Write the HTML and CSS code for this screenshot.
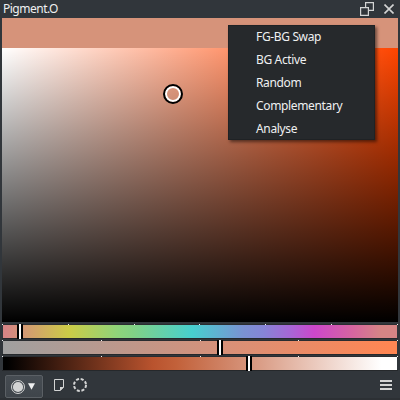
FILE: index.html
```
<!DOCTYPE html>
<html lang="en">
<head>
<meta charset="utf-8">
<title>Pigment.O</title>
<link rel="stylesheet" href="styles.css">
</head>
<body>
<main class="docker">
  <header class="titlebar">
    <span class="title">Pigment.O</span>
    <svg class="float-icon" width="14" height="14" viewBox="0 0 14 14"><path d="M5.6 5V.6h7.8v7.8H9M.6 5.6h7.8v7.8H.6z"/></svg>
    <svg class="close-icon" width="10" height="10" viewBox="0 0 10 10"><path d="M.5.5l9 9M9.5.5l-9 9"/></svg>
  </header>
  <div class="swatch"></div>
  <section class="field"><i class="cursor"></i></section>
  <section class="sliders">
    <div class="slider">
      <div class="ticks"><i></i><i></i><i></i><i></i><i></i><i></i><i></i></div>
      <div class="track hue"></div><b class="handle at-hue"></b>
    </div>
    <div class="slider">
      <div class="ticks"><i></i><i></i><i></i><i></i><i></i></div>
      <div class="track saturation"></div><b class="handle at-saturation"></b>
    </div>
    <div class="slider">
      <div class="ticks"><i></i><i></i><i></i><i></i><i></i></div>
      <div class="track lightness"></div><b class="handle at-lightness"></b>
    </div>
  </section>
  <footer class="toolbar">
    <button class="mode">
      <svg width="14" height="14" viewBox="0 0 14 14"><circle class="ring" cx="7" cy="7" r="6.5"/><circle class="disc" cx="7" cy="7" r="5.1"/></svg>
      <svg width="7" height="7" viewBox="0 0 7 7"><path class="arrow" d="M0 .3h7L3.5 6.8z"/></svg>
    </button>
    <svg class="page-icon" width="10" height="12" viewBox="0 0 10 12"><path class="line" d="M.5.5h9v7.7L6.2 11.5H.5z"/><path class="disc" d="M6 8h4L6 12z"/></svg>
    <svg class="dash-icon" width="14" height="14" viewBox="0 0 14 14"><circle cx="7" cy="7" r="6"/></svg>
    <svg class="menu-icon" width="12" height="10" viewBox="0 0 12 10"><path class="disc" d="M0 0h12v2H0zM0 4h12v2H0zM0 8h12v2H0z"/></svg>
  </footer>
  <ul class="menu">
    <li>FG-BG Swap</li><li>BG Active</li><li>Random</li><li>Complementary</li><li>Analyse</li>
  </ul>
</main>
</body>
</html>
```

FILE: styles.css
```
* { box-sizing: border-box; }
body { margin: 0; background: #31363b; color: #eff0f1; font: 12px/18px "Noto Sans", "Open Sans", sans-serif; }
.docker { position: relative; display: flex; flex-direction: column; width: 400px; height: 400px; padding: 0 2px; overflow: hidden; border-bottom: 2px solid #2c3034; }
.docker > * { flex-shrink: 0; }
.titlebar { display: flex; height: 18px; padding: 0 4px 0 1px; }
.title { flex: 1; letter-spacing: -.5px; }
.float-icon { margin: 2px 10px 0 0; }
.close-icon { margin-top: 4px; }
.titlebar path { fill: none; stroke: #d3d4d4; stroke-width: 1.2; }
.titlebar .close-icon path { stroke-width: 1.6; }
.swatch { height: 30px; background: #d6937a; }
.field { position: relative; height: 274px; background: linear-gradient(to bottom, transparent, #000), linear-gradient(to right, #fff, #ff4500); }
.cursor { position: absolute; left: 161px; top: 36px; width: 20px; height: 20px; border: 2px solid #000; border-radius: 50%; box-shadow: inset 0 0 0 2px #fff; }
.sliders { display: flex; flex-direction: column; padding-top: 2px; height: 50px; }
.slider { position: relative; height: 16px; border-bottom: 1px solid #31363b; }
.ticks { display: flex; justify-content: space-between; height: 1px; background: #292c30; }
.ticks i { width: 1px; height: 1px; background: #eff0f1; }
.track { height: 13px; margin: 0 1px; }
.slider::after { content: ""; display: block; height: 1px; background: #25282b; }
.hue { background: linear-gradient(to right, #d68585, #d68585 1%, #cccc47 16.7%, #8fd47a 29%, #82d285 33%, #47cfcf 48%, #7a92d3 61%, #8585d6 66%, #a766d6 73%, #cc47cc 79%, #d6669f 89%, #d68585 96%); }
.saturation { background: linear-gradient(to right, #a0a0a0, #d6917a 55%, #ff8653 98%); }
.lightness { background: linear-gradient(to right, #000 1%, #b9532e 38%, #c2613a 44%, #d6937a 62%, #fff 96%); }
.handle { position: absolute; top: 0; width: 6px; height: 15px; background: #fff; border: solid #000; border-width: 0 2px; }
.at-hue { left: 15px; }
.at-saturation { left: 215px; }
.at-lightness { left: 244px; }
.toolbar { display: flex; align-items: center; height: 26px; padding: 0 6px 0 3px; }
.mode { display: flex; align-items: center; gap: 3px; width: 38px; height: 23px; margin: 3px 11px 0 0; padding: 0 0 0 5px; border: 1px solid #5b6065; border-radius: 2px; background: linear-gradient(#464c52, #3f454b); box-shadow: 0 1px 1px #272b2e; }
.ring, .line { fill: none; stroke: #d3d4d4; }
.disc { fill: #d3d4d4; }
.arrow { fill: #eff0f1; }
.dash-icon { margin-left: 9px; }
.dash-icon circle { fill: none; stroke: #d3d4d4; stroke-width: 2; stroke-dasharray: 3 1.712; }
.menu-icon { margin-left: auto; }
.menu { position: absolute; left: 228px; top: 25px; width: 147px; height: 115px; margin: 0; padding: 0; list-style: none; background: #26292c; border: 1px solid #1f2225; box-shadow: 2px 2px 3px rgba(0,0,0,.5); }
.menu li { height: 23px; padding-left: 27px; line-height: 22px; letter-spacing: -.35px; }
```
